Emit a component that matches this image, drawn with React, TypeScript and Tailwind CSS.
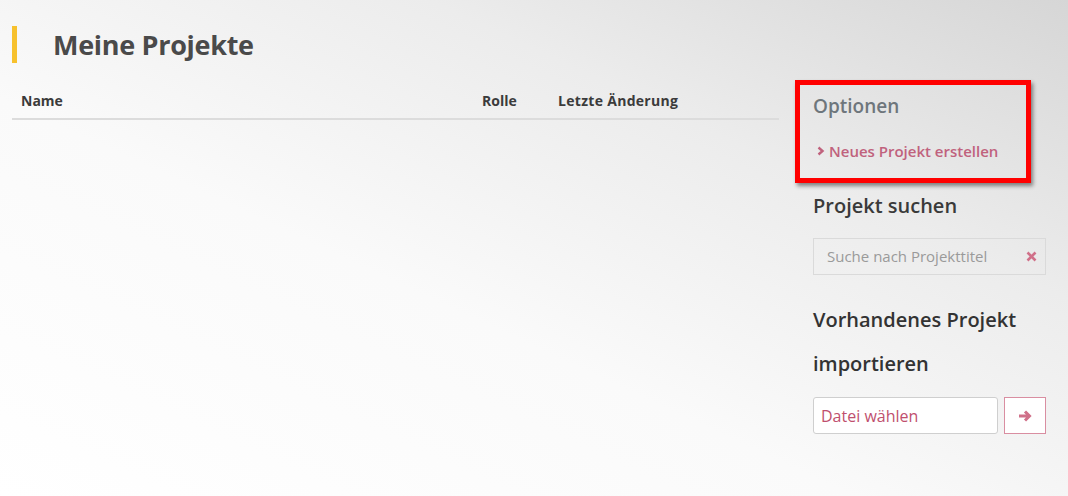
import React from "react";

const font = { fontFamily: '"Open Sans", "Liberation Sans", sans-serif' };

export default function App() {
  return (
    <div
      className="w-[1068px] h-[496px] overflow-hidden bg-[linear-gradient(205deg,#d6d6d6_0%,#ececec_30%,#fafafa_60%,#ffffff_100%)]"
      style={font}
    >
      <div className="flex gap-[34px] pl-[12px] pr-[22px]">
        {/* left: project list */}
        <div className="w-[767px] shrink-0">
          <div className="flex items-center h-[38px] mt-[25px]">
            <div className="w-[5px] h-[37px] bg-[#f7c12d]" />
            <h1 className="ml-[36px] text-[27px] font-bold text-[#4a4a4a] tracking-[-0.3px] leading-none">
              Meine Projekte
            </h1>
          </div>
          <div className="mt-[19px] flex items-center h-[38px] border-b-2 border-[#dcdcdc] text-[14px] font-bold text-[#3b3b3b]">
            <span className="pl-[9px] w-[470px]">Name</span>
            <span className="w-[76px]">Rolle</span>
            <span className="tracking-[0.3px]">Letzte Änderung</span>
          </div>
        </div>

        {/* right: sidebar */}
        <div className="w-[233px] shrink-0 relative">
          <div className="absolute left-[-18px] top-[80px] w-[236px] h-[103px] border-[5px] border-[#ff0000] shadow-[2px_3px_4px_rgba(0,0,0,0.45)]" />
          <div className="mt-[93px] text-[19px] font-semibold text-[#6e767c] leading-[26px]">
            Optionen
          </div>
          <div className="mt-[23px] flex items-center text-[15px] font-semibold text-[#c0627d] leading-[18px]">
            <svg width="9" height="10" viewBox="0 0 9 10" className="ml-[3px] mr-[4px]">
              <path d="M2.5 1.5 L6.5 5 L2.5 8.5" fill="none" stroke="#c0627d" strokeWidth="2.4" />
            </svg>
            Neues Projekt erstellen
          </div>
          <div className="mt-[33px] text-[20px] font-semibold text-[#3a3a3a] leading-[26px]">
            Projekt suchen
          </div>
          <div className="mt-[19px] h-[37px] border border-[#dadada] flex items-center justify-between pl-[13px] pr-[8px]">
            <span className="text-[15px] text-[#9a9a9a]">Suche nach Projekttitel</span>
            <svg width="11" height="11" viewBox="0 0 11 11">
              <path d="M1.5 1.5 L9.5 9.5 M9.5 1.5 L1.5 9.5" stroke="#d07089" strokeWidth="2.6" />
            </svg>
          </div>
          <div className="mt-[23px] text-[20px] font-semibold text-[#333] leading-[44px]">
            Vorhandenes Projekt importieren
          </div>
          <div className="mt-[11px] flex gap-[6px]">
            <div className="w-[185px] h-[37px] border border-[#cfcfcf] rounded-[3px] bg-white flex items-center px-[7px] text-[16px] text-[#c04f6e]">
              Datei wählen
            </div>
            <div className="w-[42px] h-[37px] border border-[#d98ea1] bg-white flex items-center justify-center">
              <svg width="14" height="14" viewBox="0 0 14 14">
                <path d="M1 7 H11.5 M7 2.5 L11.5 7 L7 11.5" fill="none" stroke="#d07089" strokeWidth="3" strokeLinejoin="miter" />
              </svg>
            </div>
          </div>
        </div>
      </div>
    </div>
  );
}
